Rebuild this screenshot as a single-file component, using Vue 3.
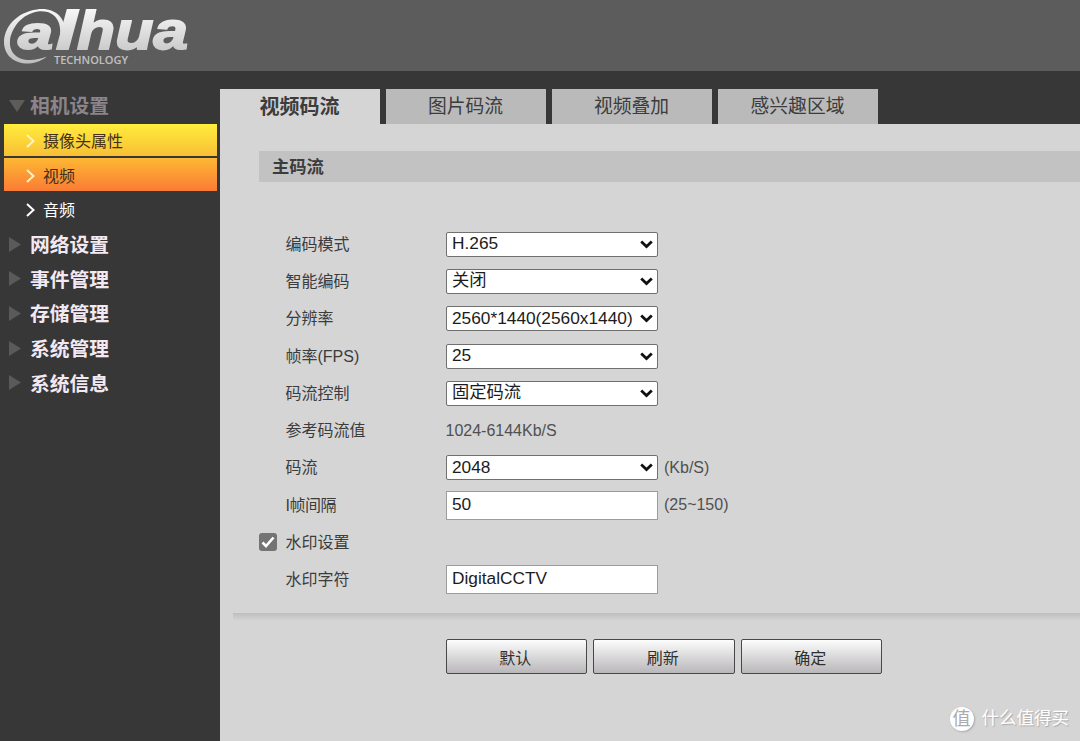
<script setup>
import { ref } from 'vue';

const subMenus = ref([
	{ name: '摄像头属性', state: 'hover' },
	{ name: '视频', state: 'active' },
	{ name: '音频', state: '' },
]);

const menus = ref(['网络设置', '事件管理', '存储管理', '系统管理', '系统信息']);

const tabs = ref(['视频码流', '图片码流', '视频叠加', '感兴趣区域']);
const currentTab = ref(0);

const rows = ref([
	{ label: '编码模式', type: 'select', value: 'H.265' },
	{ label: '智能编码', type: 'select', value: '关闭' },
	{ label: '分辨率', type: 'select', value: '2560*1440(2560x1440)' },
	{ label: '帧率(FPS)', type: 'select', value: '25' },
	{ label: '码流控制', type: 'select', value: '固定码流' },
	{ label: '参考码流值', type: 'text', value: '1024-6144Kb/S' },
	{ label: '码流', type: 'select', value: '2048', hint: '(Kb/S)' },
	{ label: 'I帧间隔', type: 'input', value: '50', hint: '(25~150)', tight: true },
	{ label: '水印设置', type: 'check' },
	{ label: '水印字符', type: 'input', value: 'DigitalCCTV' },
]);

const watermark = ref(true);
const buttons = ref(['默认', '刷新', '确定']);
</script>

<template>
	<div class="page">
		<header class="header">
			<svg
				class="logo"
				width="200"
				height="71"
				viewBox="0 0 200 71"
			>
				<defs>
					<linearGradient
						id="silver"
						gradientUnits="userSpaceOnUse"
						x1="0"
						y1="8"
						x2="0"
						y2="64"
					>
						<stop
							offset="0"
							stop-color="#f8f8f8"
						/>
						<stop
							offset="1"
							stop-color="#bdbdbd"
						/>
					</linearGradient>
				</defs>
				<g fill="url(#silver)">
					<path
						d="M65 33C66 17 54 7 37 9.500C17 12 4 27 4 42C4 56 15 64 29 63.500C36 63 43 60 47 56.500C39 59.500 31 61 24 59.500C14 57.500 9 50 10 40C12 27 22 14 38 11.500C54 9.500 62 21 60 36Z"
					/>
					<g class="logo-text">
						<text
							x="18"
							y="49"
							font-size="47"
							textLength="35"
							lengthAdjust="spacingAndGlyphs"
						>a</text>
						<text
							x="56"
							y="49"
							font-size="54"
							textLength="21"
							lengthAdjust="spacingAndGlyphs"
						>l</text>
						<text
							x="77"
							y="49"
							font-size="54"
							textLength="111"
							lengthAdjust="spacingAndGlyphs"
						>hua</text>
					</g>
					<text
						class="logo-sub"
						x="54"
						y="63.500"
						font-size="11.500"
						textLength="74"
						lengthAdjust="spacingAndGlyphs"
					>TECHNOLOGY</text>
				</g>
			</svg>
		</header>

		<div class="body">
			<aside class="sidebar">
				<div class="menu menu-open">
					<svg
						class="menu-arrow"
						width="16"
						height="12"
					>
						<path
							d="M0 0H16L8 12Z"
							fill="#5c5c5a"
						/>
					</svg>
					<span>相机设置</span>
				</div>
				<div
					class="sub-menu"
					v-for="item in subMenus"
					:key="item.name"
					:class="item.state"
				>
					<svg
						width="9"
						height="16"
					>
						<path
							d="M1 3L7.500 9L1 15"
							fill="none"
							stroke="currentColor"
							stroke-width="2"
						/>
					</svg>
					<span>{{ item.name }}</span>
				</div>
				<div
					class="menu"
					v-for="item in menus"
					:key="item"
				>
					<svg
						class="menu-arrow"
						width="13"
						height="17"
					>
						<path
							d="M0 0L12 7.500L0 15Z"
							fill="#5a5a5a"
						/>
					</svg>
					<span>{{ item }}</span>
				</div>
			</aside>

			<main class="main">
				<nav class="tabs">
					<div
						class="tab"
						v-for="(tab, idx) in tabs"
						:key="tab"
						:class="{ current: idx === currentTab }"
						@click="currentTab = idx"
					>
						{{ tab }}
					</div>
				</nav>

				<section class="panel">
					<h2 class="panel-title">主码流</h2>

					<div class="form">
						<div
							class="row"
							v-for="row in rows"
							:key="row.label"
						>
							<div class="check-box">
								<button
									v-if="row.type === 'check'"
									class="check"
									@click="watermark = !watermark"
								>
									<svg
										v-if="watermark"
										width="18"
										height="18"
									>
										<path
											d="M3.500 9.500L7 13L14.500 4.500"
											fill="none"
											stroke="#fff"
											stroke-width="2.600"
										/>
									</svg>
								</button>
							</div>
							<label
								class="label"
								:class="{ tight: row.tight }"
								>{{ row.label }}</label
							>
							<div
								v-if="row.type === 'select'"
								class="select-box"
							>
								<select v-model="row.value">
									<option>{{ row.value }}</option>
								</select>
								<svg
									class="chevron"
									width="13"
									height="9"
								>
									<path
										d="M1.200 1.500L6.500 6.500L11.800 1.500"
										fill="none"
										stroke="#111"
										stroke-width="2.800"
									/>
								</svg>
							</div>
							<input
								v-if="row.type === 'input'"
								v-model="row.value"
								class="input"
								type="text"
							/>
							<span
								v-if="row.type === 'text'"
								class="value"
								>{{ row.value }}</span
							>
							<span
								v-if="row.hint"
								class="hint"
								>{{ row.hint }}</span
							>
						</div>
					</div>

					<div class="divider"></div>

					<div class="buttons">
						<button
							class="btn"
							v-for="btn in buttons"
							:key="btn"
						>
							{{ btn }}
						</button>
					</div>
				</section>
			</main>
		</div>

		<div class="site-mark">
			<span class="site-badge">值</span>
			<span>什么值得买</span>
		</div>
	</div>
</template>

<style>
body {
	margin: 0;
	overflow: hidden;
}
</style>

<style scoped>
.page {
	position: relative;
	display: flex;
	flex-direction: column;
	width: 1080px;
	height: 741px;
	background: #373737;
	font-family: 'Liberation Sans', 'Noto Sans CJK SC', sans-serif;
	font-size: 16px;
	color: #3c3c3c;
	overflow: hidden;
}

.header {
	flex: none;
	height: 71px;
	background: #5c5c5c;
}
.logo {
	display: block;
}
.logo-text {
	font-weight: bold;
	font-style: italic;
	stroke: url(#silver);
	stroke-width: 1.800px;
}
.logo-sub {
	font-family: 'Open Sans', sans-serif;
	font-weight: 600;
}

.body {
	flex: 1;
	display: flex;
	min-height: 0;
}

.sidebar {
	width: 220px;
	flex: none;
	box-sizing: border-box;
	padding: 18px 3px 0 4px;
}
.menu {
	display: flex;
	align-items: center;
	height: 34.700px;
	padding-left: 5px;
	font-size: 19.800px;
	font-weight: bold;
	line-height: 34px;
	color: #f3e9f3;
}
.menu-arrow {
	width: 21px;
	flex: none;
}
.menu-open {
	color: #8b858b;
}
.sub-menu {
	display: flex;
	align-items: center;
	box-sizing: border-box;
	height: 32.700px;
	margin-bottom: 2px;
	padding-left: 22px;
	gap: 8px;
	color: #fff;
}
.sub-menu.hover {
	background: linear-gradient(#ffed3d, #f9bf35);
}
.sub-menu.active {
	background: linear-gradient(#fdb833, #fb7b35);
}
.sub-menu.hover svg,
.sub-menu.active svg {
	color: #fff3c0;
}
.sub-menu.hover span,
.sub-menu.active span {
	color: #45301a;
}

.main {
	flex: 1;
	display: flex;
	flex-direction: column;
	min-width: 0;
	padding-top: 18px;
}
.tabs {
	display: flex;
	gap: 6px;
	height: 35px;
}
.tab {
	box-sizing: border-box;
	width: 160px;
	padding-right: 1px;
	background: #bababa;
	font-size: 18.800px;
	line-height: 36px;
	text-align: center;
	cursor: pointer;
}
.tab.current {
	background: #d5d5d5;
	font-size: 20px;
	font-weight: bold;
}

.panel {
	flex: 1;
	background: #d5d5d5;
	padding-top: 27px;
}
.panel-title {
	height: 31px;
	margin: 0 0 0 39px;
	padding-left: 13px;
	background: #c2c2c2;
	font-size: 17.300px;
	line-height: 32px;
}
.form {
	padding: 43.500px 0 0 39px;
}
.row {
	display: flex;
	align-items: center;
	height: 37.300px;
}
.check-box {
	width: 26.500px;
	flex: none;
}
.check {
	display: block;
	width: 18px;
	height: 18px;
	margin-bottom: 1px;
	padding: 0;
	border: 0;
	border-radius: 3px;
	background: #747474;
}
.check svg {
	display: block;
}
.label {
	width: 160px;
	flex: none;
	line-height: 24px;
	padding-top: 1px;
}
.label.tight {
	letter-spacing: -0.500px;
}
.select-box {
	position: relative;
	width: 212.500px;
	height: 25px;
}
.select-box select {
	display: block;
	appearance: none;
	box-sizing: border-box;
	width: 100%;
	height: 100%;
	margin: 0;
	padding: 0 20px 2px 5.500px;
	border: 1px solid #707070;
	border-radius: 2px;
	background: #fff;
	color: #1c1c1c;
	font-family: inherit;
	font-size: 17.300px;
}
.chevron {
	position: absolute;
	right: 5px;
	top: 8px;
	pointer-events: none;
}
.input {
	box-sizing: border-box;
	width: 212.500px;
	height: 29px;
	margin: 0;
	padding: 0 5.500px 2px;
	border: 1px solid #9c9c9c;
	background: #fff;
	color: #1c1c1c;
	font-family: inherit;
	font-size: 17.300px;
}
.hint {
	margin-left: 6px;
}
.hint,
.value {
	color: #505050;
}

.divider {
	height: 8px;
	margin: 15px 0 0 13px;
	background: linear-gradient(#bebebe, #d5d5d5);
}
.buttons {
	display: flex;
	gap: 6px;
	padding: 18px 0 0 225.500px;
}
.btn {
	box-sizing: border-box;
	width: 141.500px;
	height: 35px;
	padding: 0 2px 0 0;
	border: 1px solid #484848;
	border-radius: 2px;
	background: linear-gradient(#fdfdfd, #b9b7b9);
	color: #303030;
	font-family: inherit;
	font-size: 16px;
}

.site-mark {
	position: absolute;
	right: 11px;
	bottom: 10px;
	display: flex;
	align-items: center;
	gap: 8px;
	color: #fff;
	font-size: 17.500px;
	line-height: 25px;
	text-shadow: 1px 1px 1px #aaa;
}
.site-badge {
	width: 24px;
	height: 24px;
	border-radius: 50%;
	background: #fff;
	color: #aaa;
	font-size: 18px;
	line-height: 24px;
	text-align: center;
	text-shadow: none;
	box-shadow: 1px 1px 2px #aaa;
}
</style>
